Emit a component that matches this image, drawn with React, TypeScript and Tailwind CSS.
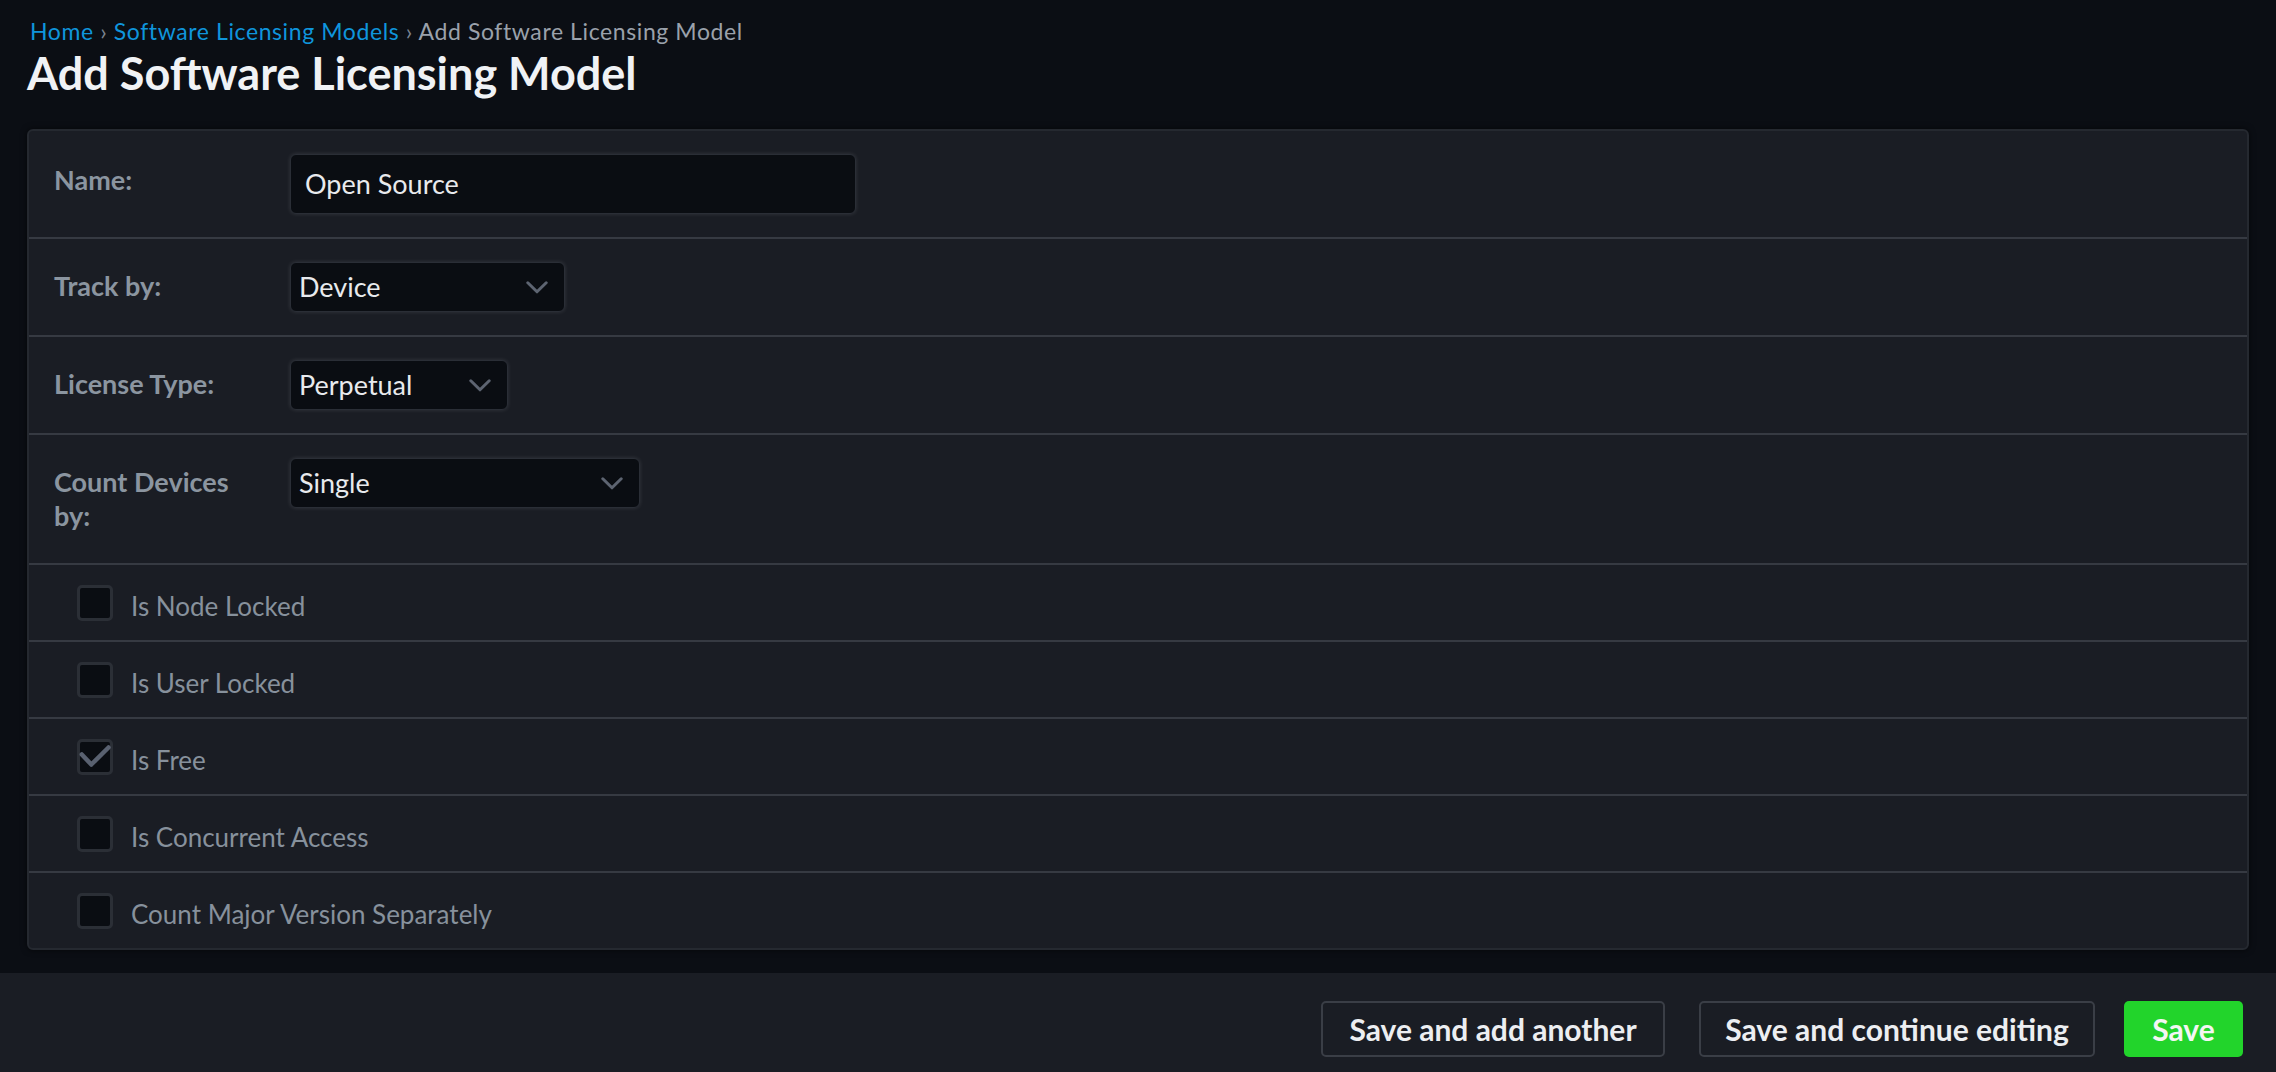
import React from "react";

const Chevron = () => (
  <svg width="22" height="13" viewBox="0 0 22 13" fill="none" className="shrink-0">
    <path d="M1.8 1.8 L11 10.8 L20.2 1.8" stroke="#5d6471" strokeWidth="3" strokeLinecap="round" strokeLinejoin="round" />
  </svg>
);

const Select = ({ value, width }: { value: string; width: string }) => (
  <div
    className={`${width} h-[50px] flex items-center justify-between pl-[8px] pr-[16px] bg-[#0a0d12] rounded-[6px] border border-[#2a2e36] shadow-[0_0_4px_rgba(255,255,255,0.12)] text-[27px] text-[#e8eaed]`}
  >
    <span>{value}</span>
    <Chevron />
  </div>
);

const Checkbox = ({ checked }: { checked?: boolean }) => (
  <div className="w-[36px] h-[36px] shrink-0 rounded-[5px] border-[3px] border-[#2b2f36] bg-[#0a0d12] flex items-center justify-center">
    {checked && (
      <svg width="30" height="30" viewBox="0 0 30 30" fill="none" className="overflow-visible">
        <path d="M1.8 12.5 L11.3 22.5 L28.5 5.5" stroke="#596170" strokeWidth="4.5" strokeLinecap="round" strokeLinejoin="round" />
      </svg>
    )}
  </div>
);

const Label = ({ children, pt = "pt-[7px]" }: { children: React.ReactNode; pt?: string }) => (
  <div className={`w-[200px] mr-[36px] shrink-0 ${pt} pb-[7px] text-[27px] leading-[34px] font-bold text-[#8b95a0]`}>
    {children}
  </div>
);

const CheckRow = ({ label, checked, last }: { label: string; checked?: boolean; last?: boolean }) => (
  <div className={`flex items-center pl-[48px] ${last ? "h-[75px]" : "h-[77px] border-b-2 border-[#363a42]"}`}>
    <Checkbox checked={checked} />
    <span className="ml-[18px] pt-[7px] text-[26px] text-[#87919c]">{label}</span>
  </div>
);

export default function App() {
  return (
    <div className="min-h-screen bg-[#0b0e14] font-['Lato',sans-serif] flex flex-col">
      <div className="pl-[30px] pt-[17px] text-[23px] leading-[28px] tracking-[0.6px]">
        <span className="text-[#0f95dc]">Home</span>
        <span className="text-[#7b8390]"> › </span>
        <span className="text-[#0f95dc]">Software Licensing Models</span>
        <span className="text-[#7b8390]"> › </span>
        <span className="text-[#9aa1ab]">Add Software Licensing Model</span>
      </div>
      <h1 className="pl-[27px] mt-[2px] text-[45px] leading-[52px] font-bold text-[#f0f2f5]">
        Add Software Licensing Model
      </h1>

      <div className="mx-[27px] mt-[30px] rounded-[6px] border-2 border-[#252930] bg-[#1a1d24] shadow-[0_0_6px_rgba(0,0,0,0.6)]">
        <div className="flex items-start pl-[25px] py-[23px] border-b-2 border-[#363a42]">
          <Label pt="pt-[9px]">Name:</Label>
          <div className="w-[566px] h-[60px] flex items-center pl-[14px] bg-[#0a0d12] rounded-[6px] border border-[#2a2e36] shadow-[0_0_4px_rgba(255,255,255,0.12)] text-[27px] text-[#e8eaed]">
            Open Source
          </div>
        </div>
        <div className="flex items-start pl-[25px] py-[23px] border-b-2 border-[#363a42]">
          <Label>Track by:</Label>
          <Select value="Device" width="w-[275px]" />
        </div>
        <div className="flex items-start pl-[25px] py-[23px] border-b-2 border-[#363a42]">
          <Label>License Type:</Label>
          <Select value="Perpetual" width="w-[218px]" />
        </div>
        <div className="flex items-start pl-[25px] py-[23px] border-b-2 border-[#363a42]">
          <Label>Count Devices by:</Label>
          <Select value="Single" width="w-[350px]" />
        </div>
        <CheckRow label="Is Node Locked" />
        <CheckRow label="Is User Locked" />
        <CheckRow label="Is Free" checked />
        <CheckRow label="Is Concurrent Access" />
        <CheckRow label="Count Major Version Separately" last />
      </div>

      <div className="mt-[23px] bg-[#1a1d24] pt-[28px] pb-[15px] pr-[33px] flex justify-end flex-1">
        <button className="w-[344px] h-[56px] rounded-[5px] border-2 border-[#3a3e46] text-[30px] font-bold text-[#eceef1] flex items-center justify-center">
          Save and add another
        </button>
        <button className="ml-[34px] w-[396px] h-[56px] rounded-[5px] border-2 border-[#3a3e46] text-[30px] font-bold text-[#eceef1] flex items-center justify-center">
          Save and continue editing
        </button>
        <button className="ml-[29px] w-[119px] h-[56px] rounded-[5px] bg-[#22d42b] text-[30px] font-bold text-[#f4f6f4] flex items-center justify-center">
          Save
        </button>
      </div>
    </div>
  );
}
